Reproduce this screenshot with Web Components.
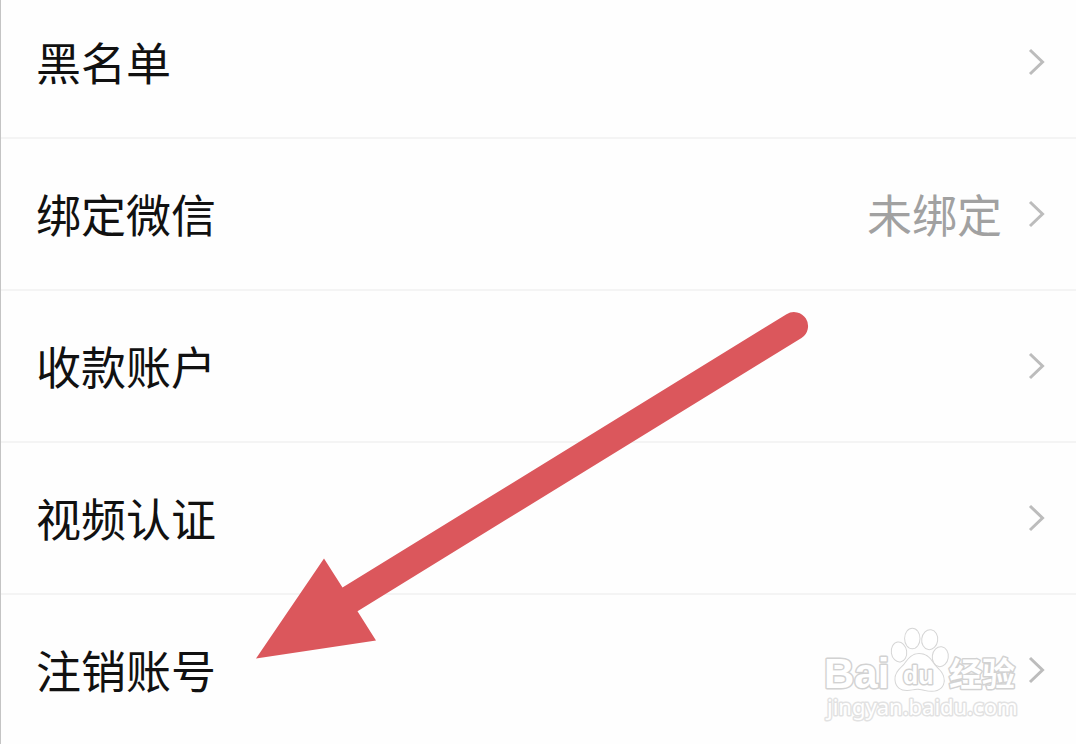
<!DOCTYPE html>
<html lang="zh-CN">
<head>
<meta charset="utf-8">
<meta name="viewport" content="width=device-width, initial-scale=1">
<title>账号设置</title>
<style>
body { margin: 0; background: #fefefe; overflow-x: hidden; font-family: "Noto Sans CJK SC", sans-serif; }
</style>
</head>
<body>
<settings-page>
  <settings-row>黑名单</settings-row>
  <settings-row>绑定微信<span slot="value">未绑定</span></settings-row>
  <settings-row>收款账户</settings-row>
  <settings-row>视频认证</settings-row>
  <settings-row>注销账号</settings-row>
  <pointer-arrow slot="overlay"></pointer-arrow>
  <site-watermark slot="overlay"></site-watermark>
</settings-page>
<script>
class SettingsPage extends HTMLElement {
  constructor() {
    super();
    this.attachShadow({ mode: "open" }).innerHTML = `
      <style>
        :host { display: block; position: relative; box-sizing: border-box; border-left: 1px solid #c4c4c4; overflow: hidden; }
        main { display: flex; flex-direction: column; }
        ::slotted(settings-row:first-of-type) { --row-top: 29px; }
        ::slotted(settings-row:last-of-type) { --row-bottom: 41px; --row-line: 0px; }
      </style>
      <main><slot></slot></main>
      <slot name="overlay"></slot>`;
  }
}

class SettingsRow extends HTMLElement {
  constructor() {
    super();
    this.attachShadow({ mode: "open" }).innerHTML = `
      <style>
        :host { display: block; border-bottom: var(--row-line, 2px) solid #f4f4f4; }
        a { display: flex; align-items: center; gap: 26px; box-sizing: border-box;
            padding: var(--row-top, 42px) 30px var(--row-bottom, 42px) 35px;
            font-size: 45px; line-height: 66px; color: #111; text-decoration: none; }
        .label { flex: 1; }
        .value { color: #a1a1a1; }
        svg { flex: none; display: block; width: 18px; height: 28px; }
      </style>
      <a href="#"><span class="label"><slot></slot></span><span class="value"><slot name="value"></slot></span>
        <svg viewBox="0 0 18 28" aria-hidden="true"><path d="M2 2 14.500 14 2 26" fill="none" stroke="#bcbcbc" stroke-width="3"/></svg></a>`;
  }
}

class PointerArrow extends HTMLElement {
  constructor() {
    super();
    this.attachShadow({ mode: "open" }).innerHTML = `
      <style>
        :host { position: absolute; left: 255px; top: 312px; pointer-events: none; }
        svg { display: block; }
      </style>
      <svg width="554" height="348" viewBox="256 312 554 348" aria-hidden="true">
        <path fill="#db575c" d="M256 658.500 324 558.500 342.500 587.500 786.500 314.200A14 14 0 0 1 801.500 338L357.500 611.200 376 640.500Z"/>
      </svg>`;
  }
}

class SiteWatermark extends HTMLElement {
  constructor() {
    super();
    this.attachShadow({ mode: "open" }).innerHTML = `
      <style>
        :host { position: absolute; right: 54px; bottom: 20px; pointer-events: none; }
        svg { display: block; }
        text, .paw { fill: #fff; stroke: #d2d2d2; stroke-width: 3; paint-order: stroke; stroke-linejoin: round; }
        .paw { stroke: #d6d6d6; stroke-width: 2; }
        .latin { font-family: "Liberation Sans", sans-serif; font-weight: 700; }
        .cjk { font-family: "Noto Sans CJK SC", sans-serif; font-weight: 700; }
        .url { font-family: "Noto Sans", sans-serif; stroke: #e2e2e2; }
      </style>
      <svg width="202" height="100" viewBox="820 624 202 100">
        <text class="latin" x="824" y="688" font-size="42">Bai</text>
        <g class="paw">
          <ellipse cx="899" cy="652" rx="7.200" ry="9.500" transform="rotate(-8 899 652)"/>
          <ellipse cx="912.300" cy="638.500" rx="7.200" ry="9.800"/>
          <ellipse cx="929.700" cy="639.700" rx="7.500" ry="9.500" transform="rotate(8 929.700 639.700)"/>
          <ellipse cx="940.300" cy="656.700" rx="7.500" ry="9.500" transform="rotate(8 940.300 656.700)"/>
          <path d="M919 654C911 654 908 660 904 665C900 669 895 673 895.500 680C896 687 901 690 907 690C912 690 915 688 920 689C926 690 931 692 937 690C943 688 945 682 943 676C941 670 936 668 933 663C930 658 926 654 919 654Z"/>
        </g>
        <text class="latin" x="903" y="684" font-size="25">du</text>
        <text class="cjk" x="949" y="686" font-size="33">经验</text>
        <text class="url" x="827" y="715" font-size="22">jingyan.baidu.com</text>
      </svg>`;
  }
}

customElements.define("settings-page", SettingsPage);
customElements.define("settings-row", SettingsRow);
customElements.define("pointer-arrow", PointerArrow);
customElements.define("site-watermark", SiteWatermark);
</script>
</body>
</html>
